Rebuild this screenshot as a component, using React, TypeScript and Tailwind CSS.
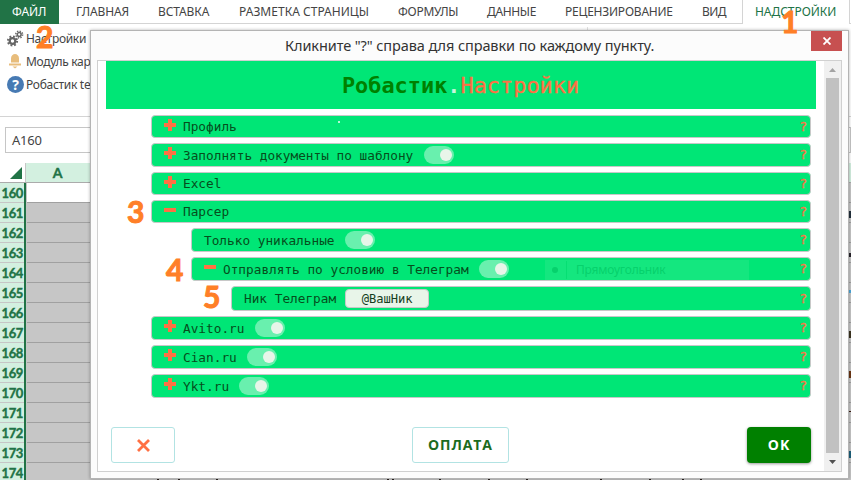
import React from "react";

const ui = "font-['Noto_Sans',sans-serif]";
const tabs = [
  { t: "ГЛАВНАЯ", c: "w-[53px] tracking-[-0.1px]" },
  { t: "ВСТАВКА", c: "w-[52px] tracking-[-0.1px]" },
  { t: "РАЗМЕТКА СТРАНИЦЫ", c: "w-[130px] tracking-[0.03px]" },
  { t: "ФОРМУЛЫ", c: "w-[60px] tracking-[-0.25px]" },
  { t: "ДАННЫЕ", c: "w-[49px] tracking-[-0.35px]" },
  { t: "РЕЦЕНЗИРОВАНИЕ", c: "w-[108px] tracking-[-0.22px]" },
  { t: "ВИД", c: "w-[25px] tracking-[-0.6px]" },
];

type Item = { label: string; h: string; indent?: string; mark?: "+" | "-"; toggle?: boolean; input?: string; ghost?: boolean; speck?: boolean };
const items: Item[] = [
  { label: "Профиль", h: "h-[23px]", mark: "+", speck: true },
  { label: "Заполнять документы по шаблону", h: "h-[24px]", mark: "+", toggle: true },
  { label: "Excel", h: "h-[23px]", mark: "+" },
  { label: "Парсер", h: "h-[23px]", mark: "-" },
  { label: "Только уникальные", h: "h-[24px]", indent: "ml-[40px]", toggle: true },
  { label: "Отправлять по условию в Телеграм", h: "h-[24px]", indent: "ml-[40px]", mark: "-", toggle: true, ghost: true },
  { label: "Ник Телеграм", h: "h-[25px]", indent: "ml-[80px]", input: "@ВашНик" },
  { label: "Avito.ru", h: "h-[24px]", mark: "+", toggle: true },
  { label: "Cian.ru", h: "h-[24px]", mark: "+", toggle: true },
  { label: "Ykt.ru", h: "h-[24px]", mark: "+", toggle: true },
];

// Fragments of cell contents that stick out past the dialog window
const bottomMarks = ["left-[157px]", "left-[178px]", "left-[216px]", "left-[387px]", "left-[392px]", "left-[439px]", "left-[488px]", "left-[526px]", "left-[600px]", "left-[649px]", "left-[682px]", "left-[700px]"];
const sideMarks = ["top-[211px] h-[7px] bg-[#22303c]", "top-[253px] h-[4px] bg-[#26222a]", "top-[290px] h-[3px] bg-[#4ba6d8]", "top-[331px] h-[7px] bg-[#3b3320]", "top-[371px] h-[7px] bg-[#6b3514]", "top-[411px] h-[1px] bg-[#3a1a10]", "top-[451px] h-[7px] bg-[#1c5f7a]"];

function Mark({ kind }: { kind: "+" | "-" }) {
  return (
    <svg className="ml-[12px] mr-[7px] h-[12px] w-[12px] -translate-y-[2px] shrink-0" viewBox="0 0 12 12" fill="#ff7043">
      <rect x="0" y="4" width="12" height="4" />
      {kind === "+" && <rect x="4" y="0" width="4" height="12" />}
    </svg>
  );
}

function Row({ item }: { item: Item }) {
  return (
    <div className={`relative flex items-center rounded-[4px] border border-[#c8c8c8] bg-[#00e676] ${item.h} ${item.indent ?? ""}`}>
      {item.mark ? <Mark kind={item.mark} /> : <span className="w-[12px]" />}
      <span className="whitespace-pre pt-px text-[12.76px] leading-[20px] text-[#064d1c]">{item.label}</span>
      {item.toggle && (
        <span className="ml-[10.4px] flex h-[18px] w-[30px] items-center justify-end rounded-full bg-[#69f0ae] pr-[2px]">
          <span className="h-[12px] w-[12px] rounded-full bg-[#e8f5e9]" />
        </span>
      )}
      {item.input && (
        <span className="ml-[9px] flex h-[19px] w-[84px] items-center justify-center rounded-[4px] border border-[#c8c8c8] bg-[#e8f5e9] pt-px text-[12.1px] text-[#143d20]">
          {item.input}
        </span>
      )}
      {item.ghost && (
        <span className="absolute left-[353px] top-[2px] flex h-[20px] w-[204px] items-center bg-[#14e77f] font-['Noto_Sans',sans-serif] text-[12px] text-[#06d16c]">
          <span className="ml-[7px] mr-[8px] h-[6px] w-[6px] rounded-full bg-[#06d16c]" />
          <span className="border-l border-[#06df73] pl-[9px] tracking-[-0.2px]">Прямоугольник</span>
        </span>
      )}
      {item.speck && <span className="absolute left-[186px] top-[5px] h-[2px] w-[2px] bg-[#b9f6d5]" />}
      <span className="ml-auto mr-[3px] text-[13px] text-[#ff7043] [-webkit-text-stroke:0.3px_#ff7043]">?</span>
    </div>
  );
}

function Gears() {
  return (
    <svg className="h-[17px] w-[17px]" viewBox="0 0 17 17" fill="none" stroke="#666">
      <circle cx="5.5" cy="11" r="2.8" strokeWidth="2.2" />
      <circle cx="5.5" cy="11" r="4.6" strokeWidth="2" strokeDasharray="1.8 1.81" />
      <circle cx="12.2" cy="4.5" r="1.9" strokeWidth="1.5" />
      <circle cx="12.2" cy="4.5" r="3.4" strokeWidth="1.5" strokeDasharray="1.35 1.32" />
    </svg>
  );
}

function Bell() {
  return (
    <svg className="h-[17px] w-[17px]" viewBox="0 0 17 17" fill="#e8bd7c">
      <path d="M4 9.5V5.5C4 2.5 6 1 8 1S12 2.5 12 5.5V9.5Z" />
      <path d="M2 10.5H14V12.5H2Z" />
      <path d="M5.5 13.5H10.5L8 15.5Z" />
    </svg>
  );
}

export default function App() {
  return (
    <div className={`relative flex h-[480px] w-[851px] flex-col overflow-hidden bg-white text-[#444] ${ui}`}>
      <header className="flex h-[24px] shrink-0 text-[12px] leading-[23px]">
        <div className="w-[59px] bg-[#217346] pl-[12px] text-white">ФАЙЛ</div>
        <div className="flex w-[683px] gap-[29px] border-b border-[#d4d4d4] pl-[17px]">
          {tabs.map((t) => (
            <span key={t.t} className={`whitespace-nowrap ${t.c}`}>{t.t}</span>
          ))}
        </div>
        <div className="w-[108px] border-x border-[#d4d4d4] pl-[12px] tracking-[-0.05px] text-[#217346]">НАДСТРОЙКИ</div>
        <div className="flex-1 border-b border-[#d4d4d4]" />
      </header>
      <section className="flex h-[93px] shrink-0 border-b border-[#d4d4d4] pt-[3px] text-[12px] tracking-[-0.3px]">
        <div className="flex w-[588px] flex-col border-r border-[#e1e1e1] pl-[7px]">
          <div className="flex h-[23px] items-center gap-[2px]"><Gears /><span>Настройки</span></div>
          <div className="flex h-[23px] items-center gap-[2px]"><Bell /><span>Модуль карт</span></div>
          <div className="flex h-[23px] items-center gap-[2px]">
            <span className="flex h-[17px] w-[17px] items-center justify-center rounded-full bg-[#477ab3] text-[14px] font-bold leading-none text-white">?</span>
            <span>Робастик telegram</span>
          </div>
        </div>
      </section>
      <section className="flex h-[46px] shrink-0 pl-[5px] pt-[10px]">
        <div className="flex h-[26px] flex-1 items-center border border-[#c6c6c6] pl-[6px] pt-px text-[13px] tracking-[-0.2px]">A160</div>
      </section>
      <section className="flex h-[20px] shrink-0 border-b border-[#ababab] bg-[#d3f0e0] font-['Lato',sans-serif]">
        <div className="flex w-[26px] items-end justify-end border-r border-[#c6c6c6] bg-white pb-[3px] pr-[3px]">
          <svg className="h-[12px] w-[12px]" viewBox="0 0 12 12" fill="#217346"><path d="M12 0V12H0Z" /></svg>
        </div>
        <div className="w-[63px] text-center text-[14px] font-bold leading-[20px] text-[#217346] [-webkit-text-stroke:0.4px_#217346]">A</div>
      </section>
      <section className="flex h-[297px] overflow-hidden">
        <div className="w-[26px] border-r-2 border-[#217346] bg-[#d3f0e0] font-['Lato',sans-serif]">
          {Array.from({ length: 15 }, (_, i) => (
            <div key={i} className="h-[20px] border-b border-[#c6c6c6] pr-px text-right text-[13px] font-bold leading-[21px] tracking-[-0.4px] text-[#217346] [-webkit-text-stroke:0.4px_#217346]">{160 + i}</div>
          ))}
        </div>
        <div className="flex-1 bg-[#c6c6c6]">
          {Array.from({ length: 15 }, (_, i) => (
            <div key={i} className="ml-px flex h-[20px] border-b border-[#a0a0a0]">
              <div className={`w-[63px] ${i === 0 ? "bg-white" : ""}`} />
            </div>
          ))}
        </div>
      </section>
      {bottomMarks.map((p) => <i key={p} className={`absolute top-[479px] h-px w-[2px] bg-[#2b2320] ${p}`} />)}
      {sideMarks.map((p) => <i key={p} className={`absolute left-[849px] w-[2px] ${p}`} />)}

      <div className="absolute left-[90px] top-[30px] flex h-[449px] w-[759px] flex-col border border-[#b4b4b4] bg-[#fcfcfc] pl-[6px] pr-[6px] shadow-[0_0_3px_rgba(0,0,0,0.3)]">
        <div className="flex h-[29px] shrink-0 items-start">
          <div className="w-[714px] pl-[188px] text-[14.5px] leading-[29px] tracking-[-0.09px] text-[#333]">
            <span className="whitespace-nowrap">Кликните "?" справа для справки по каждому пункту.</span>
          </div>
          <div className="flex h-[20px] w-[31px] items-center justify-center bg-[#c75050]">
            <svg className="h-[8px] w-[8px]" viewBox="0 0 8 8" stroke="white" strokeWidth="1.8"><path d="M0.5 0.5L7.5 7.5M7.5 0.5L0.5 7.5" /></svg>
          </div>
        </div>
        <div className="flex h-[412px] border border-[#d0d0d0] bg-white">
          <div className="flex w-[726px] flex-col pl-[8px] pr-[8px] font-['DejaVu_Sans_Mono',monospace]">
            <h1 className="flex h-[48px] shrink-0 items-center justify-center bg-[#00e676] pr-px pt-[2px] text-[21.9px] text-[#ff7043]">
              <b className="text-[#008000]">Робастик</b><span className="font-bold text-[#c8f5dc]">.</span><span className="[-webkit-text-stroke:0.3px_#ff7043]">Настройки</span>
            </h1>
            <div className="ml-[45px] mr-[5px] mt-[6px] flex flex-col gap-[5px]">
              {items.map((it) => <Row key={it.label} item={it} />)}
            </div>
            <div className="ml-[5px] mr-[5px] mt-[29px] flex h-[36px] items-center font-['Open_Sans',sans-serif] text-[14px] font-bold">
              <div className="flex h-[36px] w-[64px] items-center justify-center rounded-[3px] border border-[#b2e3e3]">
                <svg className="mt-px h-[13px] w-[13px]" viewBox="0 0 13 13" stroke="#ff7043" strokeWidth="2.8"><path d="M1 1L12 12M12 1L1 12" /></svg>
              </div>
              <div className="ml-[237px] flex h-[36px] w-[97px] items-center justify-center rounded-[3px] border border-[#b2e3e3] pb-px tracking-[0.9px] text-[#1b6b20]">ОПЛАТА</div>
              <div className="ml-auto flex h-[36px] w-[64px] items-center justify-center rounded-[4px] bg-[#008000] pb-px tracking-[1px] text-white shadow-[0_1px_3px_rgba(0,0,0,0.4)]">OK</div>
            </div>
          </div>
          <div className="flex w-[17px] flex-col items-center bg-[#f0f0f0]">
            <svg className="h-[17px] w-[17px]" viewBox="0 0 17 17" fill="#a3a3a3"><path d="M5 11L8.5 7L12 11Z" /></svg>
            <div className="h-[375px] w-[13px] bg-[#c1c1c1]" />
            <svg className="h-[18px] w-[17px]" viewBox="0 0 17 18" fill="#505050"><path d="M5 7L8.5 11L12 7Z" /></svg>
          </div>
        </div>
      </div>

      <div className="font-['Lato',sans-serif] text-[30px] font-bold leading-[30px] text-[#ff7f27] [-webkit-text-stroke:1px_#ff7f27]">
        <span className="absolute left-[36px] top-[21px]">2</span>
        <span className="absolute left-[781px] top-[6px]">1</span>
        <span className="absolute left-[127px] top-[196px]">3</span>
        <span className="absolute left-[166px] top-[254px]">4</span>
        <span className="absolute left-[203px] top-[281px]">5</span>
      </div>
    </div>
  );
}
